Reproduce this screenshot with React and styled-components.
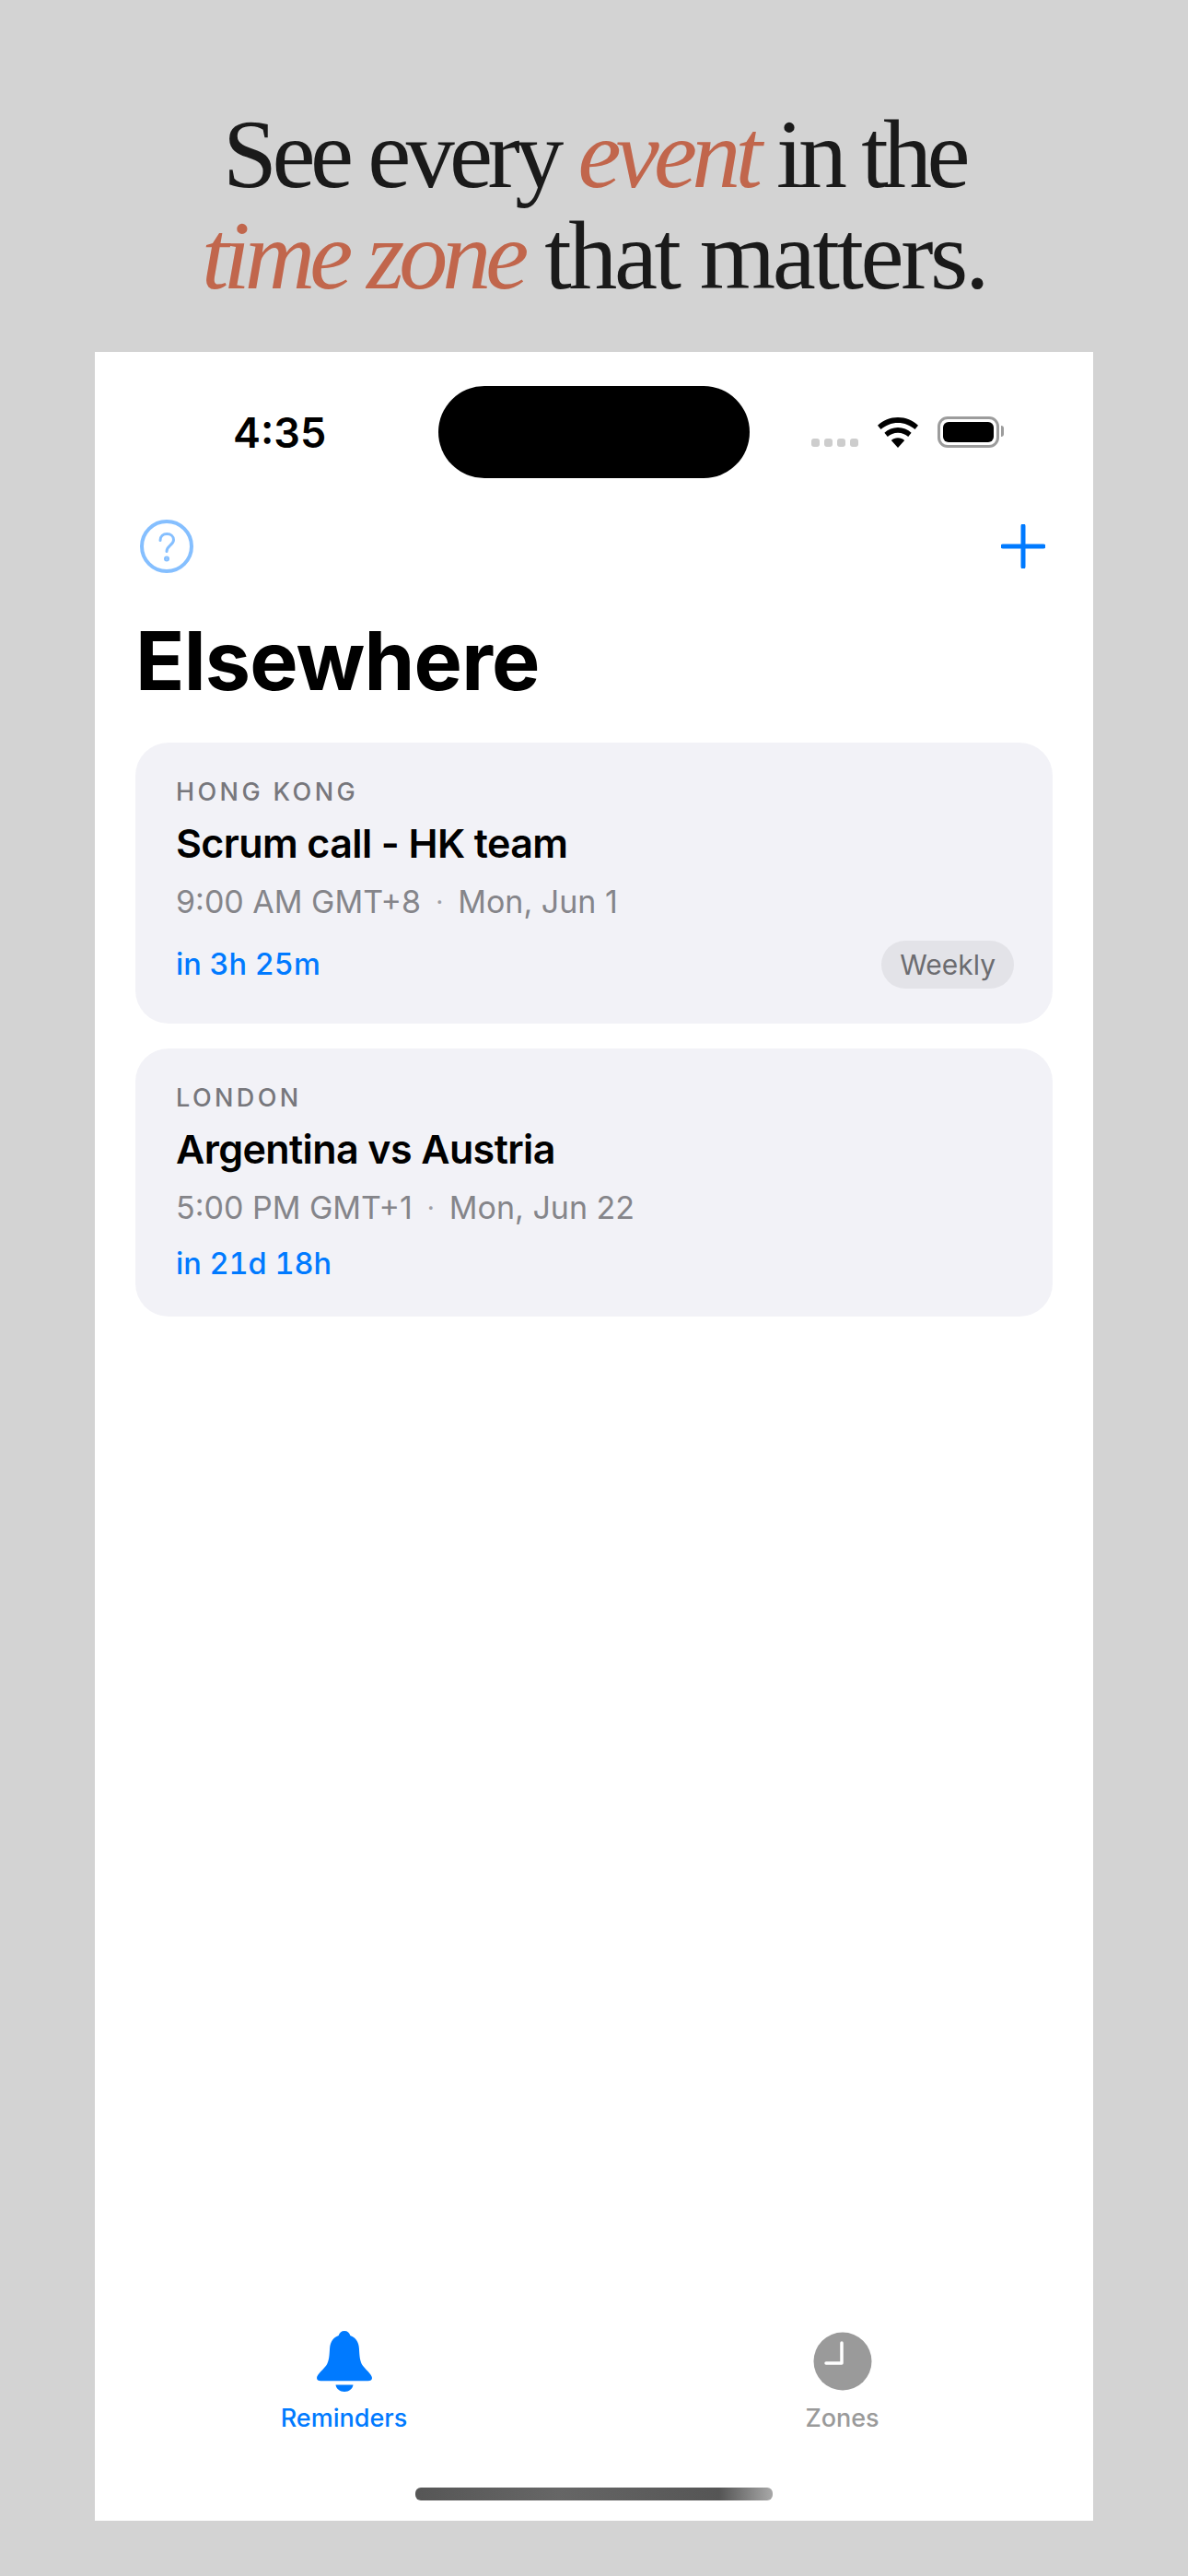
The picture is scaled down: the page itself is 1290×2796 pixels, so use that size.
import React from "react";
import styled, { createGlobalStyle } from "styled-components";

const GlobalStyle = createGlobalStyle`
    html, body { margin: 0; padding: 0; background: #d3d3d3; }
    body { font-family: "Inter", "Liberation Sans", sans-serif; }
`;

const Page = styled.div`
    width: 1290px;
    height: 2796px;
    overflow: hidden;
    background: #d3d3d3;
    display: flex;
    flex-direction: column;
    align-items: center;
`;

const Headline = styled.h1`
    margin: 0;
    height: 382px;
    box-sizing: border-box;
    padding-top: 113px;
    font-family: "Liberation Serif", serif;
    font-weight: 400;
    font-size: 106px;
    line-height: 110px;
    text-align: center;
    color: #1a1a1a;
`;

const Words = styled.span`
    letter-spacing: ${(p) => p.$tracking}px;
`;

const Accent = styled.em`
    font-style: italic;
    color: #c1664c;
    letter-spacing: ${(p) => p.$tracking}px;
`;

const Phone = styled.main`
    width: 1084px;
    height: 2354px;
    background: #fff;
    display: flex;
    flex-direction: column;
`;

const StatusBar = styled.div`
    display: grid;
    grid-template-columns: 373px 338px 1fr;
    align-items: center;
    padding-top: 37px;
    height: 100px;
`;

const Time = styled.span`
    padding-left: 150px;
    font-size: 45px;
    font-weight: 600;
    color: #000;
`;

const Island = styled.div`
    height: 100px;
    background: #000;
    border-radius: 50px;
`;

const StatusIcons = styled.div`
    display: flex;
    align-items: flex-end;
    justify-content: flex-end;
    padding-right: 102px;
`;

const Signal = styled.div`
    display: flex;
    gap: 5px;
    margin-right: 21px;
    margin-bottom: 1px;
`;

const SignalDot = styled.i`
    width: 9px;
    height: 9px;
    border-radius: 3px;
    background: #cdcdcd;
`;

const Battery = styled.div`
    margin-left: 21px;
    width: 67px;
    height: 34px;
    box-sizing: border-box;
    padding: 3px;
    border: 3px solid #9c9c9c;
    border-radius: 11px;
    position: relative;
    &::after {
        content: "";
        position: absolute;
        right: -8px;
        top: 7px;
        width: 3px;
        height: 12px;
        background: #9c9c9c;
        border-radius: 0 3px 3px 0;
    }
`;

const BatteryFill = styled.div`
    height: 100%;
    background: #000;
    border-radius: 6px;
`;

const Toolbar = styled.div`
    display: flex;
    justify-content: space-between;
    align-items: center;
    height: 62px;
    margin-top: 43px;
    padding: 0 52px 0 48px;
`;

const Title = styled.h2`
    margin: 0;
    padding: 0 0 0 44px;
    margin-top: 43px;
    font-size: 88px;
    line-height: 100px;
    font-weight: 700;
    letter-spacing: -0.8px;
    color: #000;
`;

const List = styled.div`
    display: flex;
    flex-direction: column;
    gap: 27px;
    margin: 39px 44px 0;
`;

const Card = styled.article`
    background: #f2f2f7;
    border-radius: 36px;
    padding: 36px 44px 38px;
`;

const City = styled.div`
    font-size: 27px;
    line-height: 36px;
    font-weight: 500;
    letter-spacing: 3.4px;
    color: #77777c;
`;

const EventName = styled.div`
    margin-top: 9px;
    font-size: 43px;
    line-height: 56px;
    font-weight: 600;
    letter-spacing: -0.6px;
    color: #000;
`;

const Meta = styled.div`
    margin-top: 14px;
    display: flex;
    align-items: center;
    gap: 16px;
    font-size: 34px;
    line-height: 44px;
    color: #85858a;
`;

const Dot = styled.span`
    font-size: 28px;
    color: #a0a0a5;
`;

const CardFooter = styled.div`
    margin-top: 20px;
    display: flex;
    justify-content: space-between;
    align-items: center;
`;

const Countdown = styled.span`
    font-size: 32.5px;
    line-height: 38px;
    font-weight: 500;
    font-feature-settings: "tnum";
    color: #007aff;
`;

const Pill = styled.span`
    display: block;
    height: 52px;
    margin-right: -2px;
    padding: 0 20px;
    border-radius: 26px;
    background: #e3e3e8;
    font-size: 30px;
    line-height: 52px;
    color: #6c6c70;
`;

const TabBar = styled.nav`
    margin-top: auto;
    display: grid;
    grid-template-columns: 1fr 1fr;
    padding-right: 2px;
`;

const Tab = styled.div`
    display: flex;
    flex-direction: column;
    align-items: center;
    gap: 12px;
    font-size: 27px;
    line-height: 34px;
    font-weight: 500;
    color: ${(p) => (p.$active ? "#007aff" : "#9a9a9a")};
`;

const HomeBar = styled.div`
    align-self: center;
    width: 388px;
    height: 14px;
    margin: 58px 0 22px;
    border-radius: 6px;
    background: linear-gradient(90deg, #565656 0%, #666 40%, #555 85%, #a8a8a8 100%);
`;

const HelpIcon = () => (
    <svg width="60" height="60" viewBox="0 0 60 60" fill="none" stroke="#85bfff" strokeWidth="4" strokeLinecap="round">
        <circle cx="30" cy="30" r="27" />
        <path strokeWidth="3" d="M23 23.500c0-4.400 3.200-7 7.300-7s7.200 2.600 7.200 6.400c0 5.900-7.500 6.200-7.500 12.600" />
        <circle cx="30" cy="43.500" r="1" fill="#85bfff" />
    </svg>
);

const PlusIcon = () => (
    <svg width="48" height="48" viewBox="0 0 48 48" fill="none" stroke="#007aff" strokeWidth="5" strokeLinecap="round">
        <path d="M24 2v44M2 24h44" />
    </svg>
);

const WifiIcon = () => (
    <svg width="44" height="33" viewBox="0 0 44 33" fill="#000">
        <path d="M22 0c8.400 0 16 3.300 22 8.700l-3.500 4.400C35.500 8.500 29.100 5.900 22 5.900S8.500 8.500 3.500 13.100L0 8.700C6 3.300 13.600 0 22 0z" />
        <path d="M22 11c5.600 0 10.700 2.100 14.600 5.700l-3.400 4.300c-3-2.700-6.900-4.300-11.200-4.300s-8.200 1.600-11.200 4.300l-3.400-4.300C11.300 13.100 16.400 11 22 11z" />
        <path d="M22 22.300c2.800 0 5.300 1 7.200 2.800L22 33l-7.200-7.900c1.900-1.800 4.400-2.800 7.200-2.800z" />
    </svg>
);

const BellIcon = () => (
    <svg width="60" height="66" viewBox="0 0 60 66" fill="#007aff">
        <path d="M30 0c3.400 0 5.500 2.300 6.300 5.400 6 2.200 9.100 7.600 9.600 15 .5 8.500.7 15 3.500 19.800 2.500 4.300 10.600 11 10.600 15.300 0 2.300-1.700 3.500-4.300 3.500H4.300C1.700 59.000 0 57.800 0 55.500c0-4.300 8.100-11 10.600-15.300 2.800-4.800 3-11.300 3.500-19.800.5-7.400 3.600-12.800 9.600-15C24.500 2.300 26.600 0 30 0z" transform="scale(1 .92)" />
        <path d="M20.500 58.500h19C39 62.800 35 66 30 66s-9-3.200-9.500-7.500z" />
    </svg>
);

const ClockIcon = () => (
    <svg width="64" height="66" viewBox="0 0 64 66">
        <circle cx="32" cy="33" r="31.500" fill="#9a9a9a" />
        <path d="M31 13v22H14" fill="none" stroke="#fff" strokeWidth="3.500" strokeLinecap="round" strokeLinejoin="round" />
    </svg>
);

const EventCard = ({ city, name, time, date, countdown, repeat }) => (
    <Card>
        <City>{city}</City>
        <EventName>{name}</EventName>
        <Meta>
            <span>{time}</span>
            <Dot>·</Dot>
            <span>{date}</span>
        </Meta>
        <CardFooter>
            <Countdown>{countdown}</Countdown>
            {repeat && <Pill>{repeat}</Pill>}
        </CardFooter>
    </Card>
);

const App = () => (
    <>
        <GlobalStyle />
        <Page>
            <Headline>
                <Words $tracking={-5.6}>See every </Words>
                <Accent $tracking={-5.8}>event</Accent>
                <Words $tracking={-5.6}> in the</Words>
                <br />
                <Accent $tracking={-6}>time zone</Accent>
                <Words $tracking={-3.4}> that matters.</Words>
            </Headline>
            <Phone>
                <StatusBar>
                    <Time>4:35</Time>
                    <Island />
                    <StatusIcons>
                        <Signal>
                            <SignalDot />
                            <SignalDot />
                            <SignalDot />
                            <SignalDot />
                        </Signal>
                        <WifiIcon />
                        <Battery>
                            <BatteryFill />
                        </Battery>
                    </StatusIcons>
                </StatusBar>
                <Toolbar>
                    <HelpIcon />
                    <PlusIcon />
                </Toolbar>
                <Title>Elsewhere</Title>
                <List>
                    <EventCard
                        city="HONG KONG"
                        name="Scrum call - HK team"
                        time="9:00 AM GMT+8"
                        date="Mon, Jun 1"
                        countdown="in 3h 25m"
                        repeat="Weekly"
                    />
                    <EventCard
                        city="LONDON"
                        name="Argentina vs Austria"
                        time="5:00 PM GMT+1"
                        date="Mon, Jun 22"
                        countdown="in 21d 18h"
                    />
                </List>
                <TabBar>
                    <Tab $active>
                        <BellIcon />
                        Reminders
                    </Tab>
                    <Tab>
                        <ClockIcon />
                        Zones
                    </Tab>
                </TabBar>
                <HomeBar />
            </Phone>
        </Page>
    </>
);

export default App;
